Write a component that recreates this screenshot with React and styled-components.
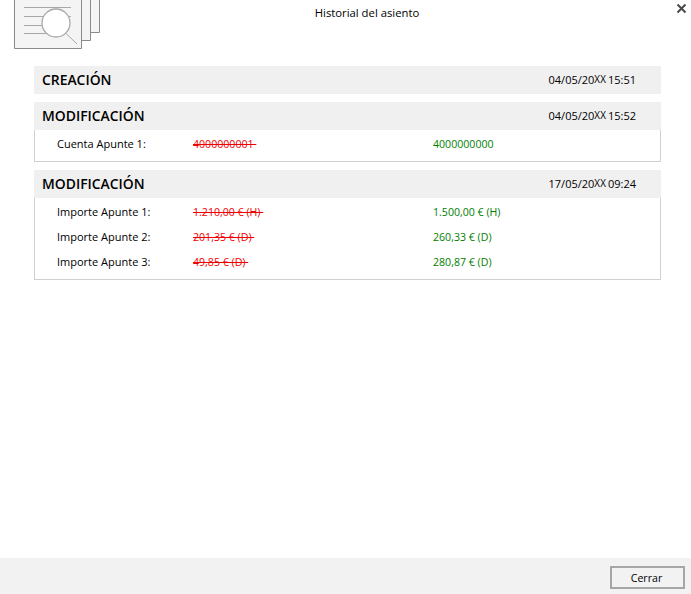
import React from 'react'
import styled, { createGlobalStyle } from 'styled-components';

const GlobalStyle = createGlobalStyle`
  html, body {
    margin: 0;
    padding: 0;
    background: #fff;
  }
  body {
    font-family: "Open Sans", "Noto Sans", "Liberation Sans", sans-serif;
    color: #000;
  }
`;

const Window = styled.div`
  width: 691px;
  height: 594px;
  display: flex;
  flex-direction: column;
  overflow: hidden;
`;

const Header = styled.header`
  position: relative;
  height: 66px;
  flex-shrink: 0;
  display: flex;
  justify-content: center;
  padding-top: 5px;
  box-sizing: border-box;
`;

const Title = styled.div`
  font-size: 11.3px;
  line-height: 16px;
  margin-left: 43px;
`;

const Logo = styled.svg`
  position: absolute;
  left: 0;
  top: 0;
`;

const CloseButton = styled.svg`
  position: absolute;
  left: 676px;
  top: 3px;
`;

const Content = styled.main`
  flex: 1;
  padding: 0 30px 0 34px;
  display: flex;
  flex-direction: column;
  gap: 8px;
`;

const SectionHead = styled.div`
  height: 28px;
  background: #f0f0f0;
  display: flex;
  align-items: center;
  justify-content: space-between;
  padding: 0 25px 0 8px;
`;

const SectionName = styled.h2`
  margin: 0;
  font-size: 13.9px;
  font-weight: 600;
  line-height: 28px;
`;

const Stamp = styled.div`
  font-size: 11px;
  line-height: 16px;
  display: flex;
  align-items: baseline;
`;

const Masked = styled.span`
  font-size: 9.9px;
  letter-spacing: 0.1px;
  margin-right: 2px;
  position: relative;
  top: -1px;
`;

const SectionBody = styled.div`
  border: 1px solid #d0d0d0;
  border-top: 0;
  padding: 1px 0 5px;
`;

const Row = styled.div`
  height: 25px;
  display: flex;
  align-items: center;
  font-size: 10.6px;
`;

const Label = styled.span`
  width: 136px;
  margin-left: 22px;
  font-size: 11px;
`;

const OldValue = styled.span`
  width: 240px;
  color: #f00000;
  white-space: pre;
  text-decoration: line-through;
`;

const NewValue = styled.span`
  color: #008000;
`;

const Footer = styled.footer`
  height: 36px;
  flex-shrink: 0;
  background: #f2f2f2;
  display: flex;
  align-items: center;
  justify-content: flex-end;
  padding-right: 6px;
`;

const CloseAction = styled.button`
  width: 75px;
  height: 23px;
  box-sizing: border-box;
  border: 2px solid #a6a6a6;
  background: #f2f2f2;
  font-family: inherit;
  font-size: 10.6px;
  color: #000;
  padding: 1px 2px 0 0;
  margin-top: 2px;
`;

const DocumentIcon = () => (
  <Logo width="110" height="56" viewBox="0 0 110 56" fill="none">
    <path d="M90.5 0V32.5H99.5V0" fill="#f4f4f4" stroke="#8a8a8a" />
    <path d="M81.5 0V40.5H90.5V0" fill="#f4f4f4" stroke="#8a8a8a" />
    <path d="M14.5 0V48.5H81.5V0" fill="#f4f4f4" stroke="#8a8a8a" />
    <g stroke="#a8a8a8">
      <path d="M24 7.5H71" />
      <path d="M24 16.5H44" />
      <path d="M66 16.5H71" />
      <path d="M24 25.5H43" />
      <path d="M24 33.5H47" />
      <path d="M66 33.5L77 44" />
      <circle cx="56" cy="23" r="14" fill="#fff" strokeWidth="1.3" />
    </g>
  </Logo>
);

const CloseIcon = () => (
  <CloseButton width="11" height="11" viewBox="0 0 11 11">
    <path d="M1.5 1.5L9.5 9.5M9.5 1.5L1.5 9.5" stroke="#4a4a4a" strokeWidth="2" />
  </CloseButton>
);

const sections = [
  { name: 'CREACIÓN', date: '04/05/20', time: '15:51', rows: [] },
  {
    name: 'MODIFICACIÓN',
    date: '04/05/20',
    time: '15:52',
    rows: [{ label: 'Cuenta Apunte 1:', from: '4000000001 ', to: '4000000000' }],
  },
  {
    name: 'MODIFICACIÓN',
    date: '17/05/20',
    time: '09:24',
    rows: [
      { label: 'Importe Apunte 1:', from: '1.210,00 € (H) ', to: '1.500,00 € (H)' },
      { label: 'Importe Apunte 2:', from: '201,35 € (D) ', to: '260,33 € (D)' },
      { label: 'Importe Apunte 3:', from: '49,85 € (D) ', to: '280,87 € (D)' },
    ],
  },
];

const App = () => {
  return (
    <Window>
      <GlobalStyle />
      <Header>
        <DocumentIcon />
        <Title>Historial del asiento</Title>
        <CloseIcon />
      </Header>
      <Content>
        {sections.map((section, i) => (
          <section key={i}>
            <SectionHead>
              <SectionName>{section.name}</SectionName>
              <Stamp>
                {section.date}<Masked>XX</Masked>{section.time}
              </Stamp>
            </SectionHead>
            {section.rows.length > 0 && (
              <SectionBody>
                {section.rows.map((row) => (
                  <Row key={row.label}>
                    <Label>{row.label}</Label>
                    <OldValue>{row.from}</OldValue>
                    <NewValue>{row.to}</NewValue>
                  </Row>
                ))}
              </SectionBody>
            )}
          </section>
        ))}
      </Content>
      <Footer>
        <CloseAction>Cerrar</CloseAction>
      </Footer>
    </Window>
  )
}

export default App
